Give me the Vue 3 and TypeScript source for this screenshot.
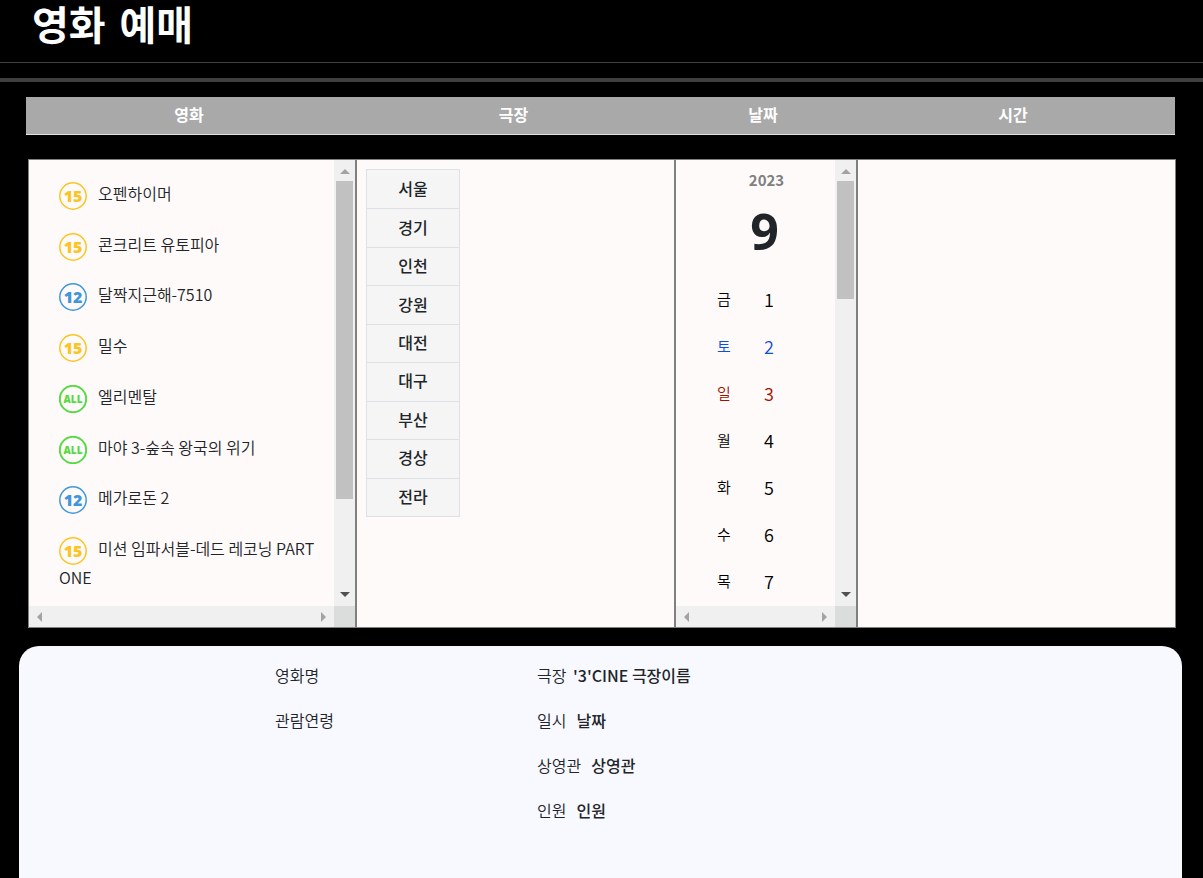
<script setup lang="ts">
interface Movie {
  rating: '15' | '12' | 'ALL'
  title: string
}

const headings: string[] = ['영화', '극장', '날짜', '시간']

const movies: Movie[] = [
  { rating: '15', title: '오펜하이머' },
  { rating: '15', title: '콘크리트 유토피아' },
  { rating: '12', title: '달짝지근해-7510' },
  { rating: '15', title: '밀수' },
  { rating: 'ALL', title: '엘리멘탈' },
  { rating: 'ALL', title: '마야 3-숲속 왕국의 위기' },
  { rating: '12', title: '메가로돈 2' },
  { rating: '15', title: '미션 임파서블-데드 레코닝 PART ONE' },
]

const regions: string[] = ['서울', '경기', '인천', '강원', '대전', '대구', '부산', '경상', '전라']

const days: { name: string; date: number; kind: string }[] = [
  { name: '금', date: 1, kind: 'weekday' },
  { name: '토', date: 2, kind: 'saturday' },
  { name: '일', date: 3, kind: 'sunday' },
  { name: '월', date: 4, kind: 'weekday' },
  { name: '화', date: 5, kind: 'weekday' },
  { name: '수', date: 6, kind: 'weekday' },
  { name: '목', date: 7, kind: 'weekday' },
]
</script>

<template>
  <div class="page">
    <header class="page-header">
      <h1>영화 예매</h1>
    </header>
    <div class="rule"></div>

    <div class="headings">
      <h2 v-for="heading in headings" :key="heading">{{ heading }}</h2>
    </div>

    <main class="panels">
      <section class="panel scroll-panel">
        <ul class="movies">
          <li v-for="movie in movies" :key="movie.title">
            <a href="#" class="movie">
              <svg class="badge" :class="'rated-' + movie.rating" viewBox="0 0 28 28" aria-hidden="true">
                <circle cx="14" cy="14" r="13.2" />
                <text x="14" :y="movie.rating === 'ALL' ? 18 : 20" text-anchor="middle">{{ movie.rating }}</text>
              </svg>{{ movie.title }}
            </a>
          </li>
        </ul>
        <div class="bar vertical">
          <i class="arrow up"></i>
          <i class="thumb long"></i>
          <i class="arrow down"></i>
        </div>
        <div class="bar horizontal">
          <i class="arrow left"></i>
          <i class="arrow right"></i>
        </div>
        <div class="corner"></div>
      </section>

      <section class="panel">
        <ul class="regions">
          <li v-for="region in regions" :key="region">
            <button type="button">{{ region }}</button>
          </li>
        </ul>
      </section>

      <section class="panel scroll-panel">
        <div class="calendar">
          <div class="year">2023</div>
          <div class="month">9</div>
          <ul class="days">
            <li v-for="day in days" :key="day.date">
              <a href="#" :class="day.kind">
                <span class="name">{{ day.name }}</span>
                <span class="date">{{ day.date }}</span>
              </a>
            </li>
          </ul>
        </div>
        <div class="bar vertical">
          <i class="arrow up"></i>
          <i class="thumb short"></i>
          <i class="arrow down"></i>
        </div>
        <div class="bar horizontal">
          <i class="arrow left"></i>
          <i class="arrow right"></i>
        </div>
        <div class="corner"></div>
      </section>

      <section class="panel"></section>
    </main>

    <footer class="summary">
      <div class="summary-column">
        <p>영화명</p>
        <p>관람연령</p>
      </div>
      <div class="summary-column">
        <p>극장 <b>'3'CINE 극장이름</b></p>
        <p>일시&nbsp; <b>날짜</b></p>
        <p>상영관&nbsp; <b>상영관</b></p>
        <p>인원&nbsp; <b>인원</b></p>
      </div>
    </footer>
  </div>
</template>

<style>
body {
  margin: 0;
  background: #000;
}
</style>

<style scoped>
.page {
  box-sizing: border-box;
  display: flex;
  flex-direction: column;
  min-height: 100vh;
  overflow: hidden;
  background: #000;
  color: #212529;
  font-family: "Noto Sans CJK KR", "Open Sans", sans-serif;
  font-size: 16px;
  font-weight: 350;
  line-height: 24px;
}

h1,
h2,
p,
ul {
  margin: 0;
  padding: 0;
}

ul {
  list-style: none;
}

a {
  color: inherit;
  text-decoration: none;
}

.page-header {
  padding: 2px 32px 12px;
  border-bottom: 1px solid #404040;
}

h1 {
  color: #fff;
  font-family: "DejaVu Sans", "Noto Sans CJK KR", sans-serif;
  font-size: 40px;
  font-weight: 700;
  line-height: 48px;
}

.rule {
  height: 4px;
  margin-top: 15px;
  background: #404040;
}

.headings {
  display: grid;
  grid-template-columns: 326fr 323fr 176fr 324fr;
  margin: 15px 28px 0 26px;
  background: #a9a9a9;
  border-bottom: 1px solid #dee2e6;
}

h2 {
  padding: 5px 0 8px;
  color: #fff;
  font-size: 16px;
  font-weight: 700;
  line-height: 24px;
  text-align: center;
}

.panels {
  display: grid;
  grid-template-columns: 328fr 319fr 182fr 319fr;
  margin: 24px 27px 0 28px;
}

.panel {
  box-sizing: border-box;
  min-height: 469px;
  border: 1px solid #808080;
  background: #fffafa;
}

.scroll-panel {
  display: grid;
  grid-template-columns: minmax(0, 1fr) 21px;
  grid-template-rows: 1fr 21px;
}

.movies {
  display: grid;
  grid-template-rows: repeat(7, 1fr) auto;
  padding: 21px 12px 17px 30px;
}

.movie {
  display: block;
}

.badge {
  width: 28px;
  height: 28px;
  margin-right: 11px;
  vertical-align: -10px;
}

.badge circle {
  fill: none;
  stroke: currentColor;
  stroke-width: 1.5;
}

.badge text {
  fill: currentColor;
  font-family: "Open Sans", sans-serif;
  font-size: 16px;
  font-weight: 800;
}

.rated-15 {
  color: #fac524;
}

.rated-12 {
  color: #3f97da;
}

.rated-ALL {
  color: #57da45;
}

.rated-ALL circle {
  stroke-width: 2;
}

.rated-ALL text {
  font-size: 10px;
}

.bar {
  display: flex;
  align-items: center;
  justify-content: space-between;
  background: #f0f0f0;
}

.vertical {
  flex-direction: column;
  padding: 9px 0;
}

.horizontal {
  padding: 0 8px;
}

.corner {
  background: #dadddb;
}

.thumb {
  width: 17px;
  margin-top: 7px;
  margin-bottom: auto;
  background: #c1c1c1;
}

.long {
  height: 318px;
}

.short {
  height: 118px;
}

.arrow {
  border: 5px solid transparent;
}

.up {
  border-top: 0;
  border-bottom-color: #a3a3a3;
}

.down {
  border-bottom: 0;
  border-top-color: #505050;
}

.left {
  border-left: 0;
  border-right-color: #a3a3a3;
}

.right {
  border-right: 0;
  border-left-color: #a3a3a3;
}

.regions {
  box-sizing: border-box;
  display: grid;
  grid-template-rows: repeat(9, 1fr);
  width: 94px;
  height: 348px;
  margin: 9px;
  border: 1px solid #dee2e6;
  background: #f5f5f5;
}

.regions li {
  display: grid;
}

.regions li + li {
  border-top: 1px solid #dee2e6;
}

.regions button {
  padding: 0 0 3px;
  border: 0;
  background: none;
  color: #212529;
  font: inherit;
  font-weight: 500;
  cursor: pointer;
}

.calendar {
  padding-top: 8px;
}

.year,
.month {
  text-align: center;
}

.year {
  padding-left: 22px;
  color: #808080;
  font-size: 15px;
  font-weight: 700;
}

.month {
  padding-left: 18px;
  margin-bottom: 5px;
  font-family: "Open Sans", sans-serif;
  font-size: 50px;
  font-weight: 700;
  line-height: 78px;
}

.days a {
  display: flex;
  align-items: center;
  height: 47px;
  padding-left: 41px;
  color: #000;
}

.days .name {
  width: 47px;
  font-size: 15px;
}

.days .date {
  font-size: 18px;
}

.days .saturday {
  color: #0d4fdb;
}

.days .sunday {
  color: #a01000;
}

.summary {
  flex: 1;
  display: grid;
  grid-template-columns: 262fr 645fr;
  margin: 18px 21px 0 19px;
  padding: 8px 0 0 256px;
  border-radius: 20px 20px 0 0;
  background: #f8f8ff;
}

.summary-column p {
  height: 24px;
  padding: 9px 0 12px;
}

.summary b {
  margin-left: 3px;
  font-weight: 500;
}
</style>
